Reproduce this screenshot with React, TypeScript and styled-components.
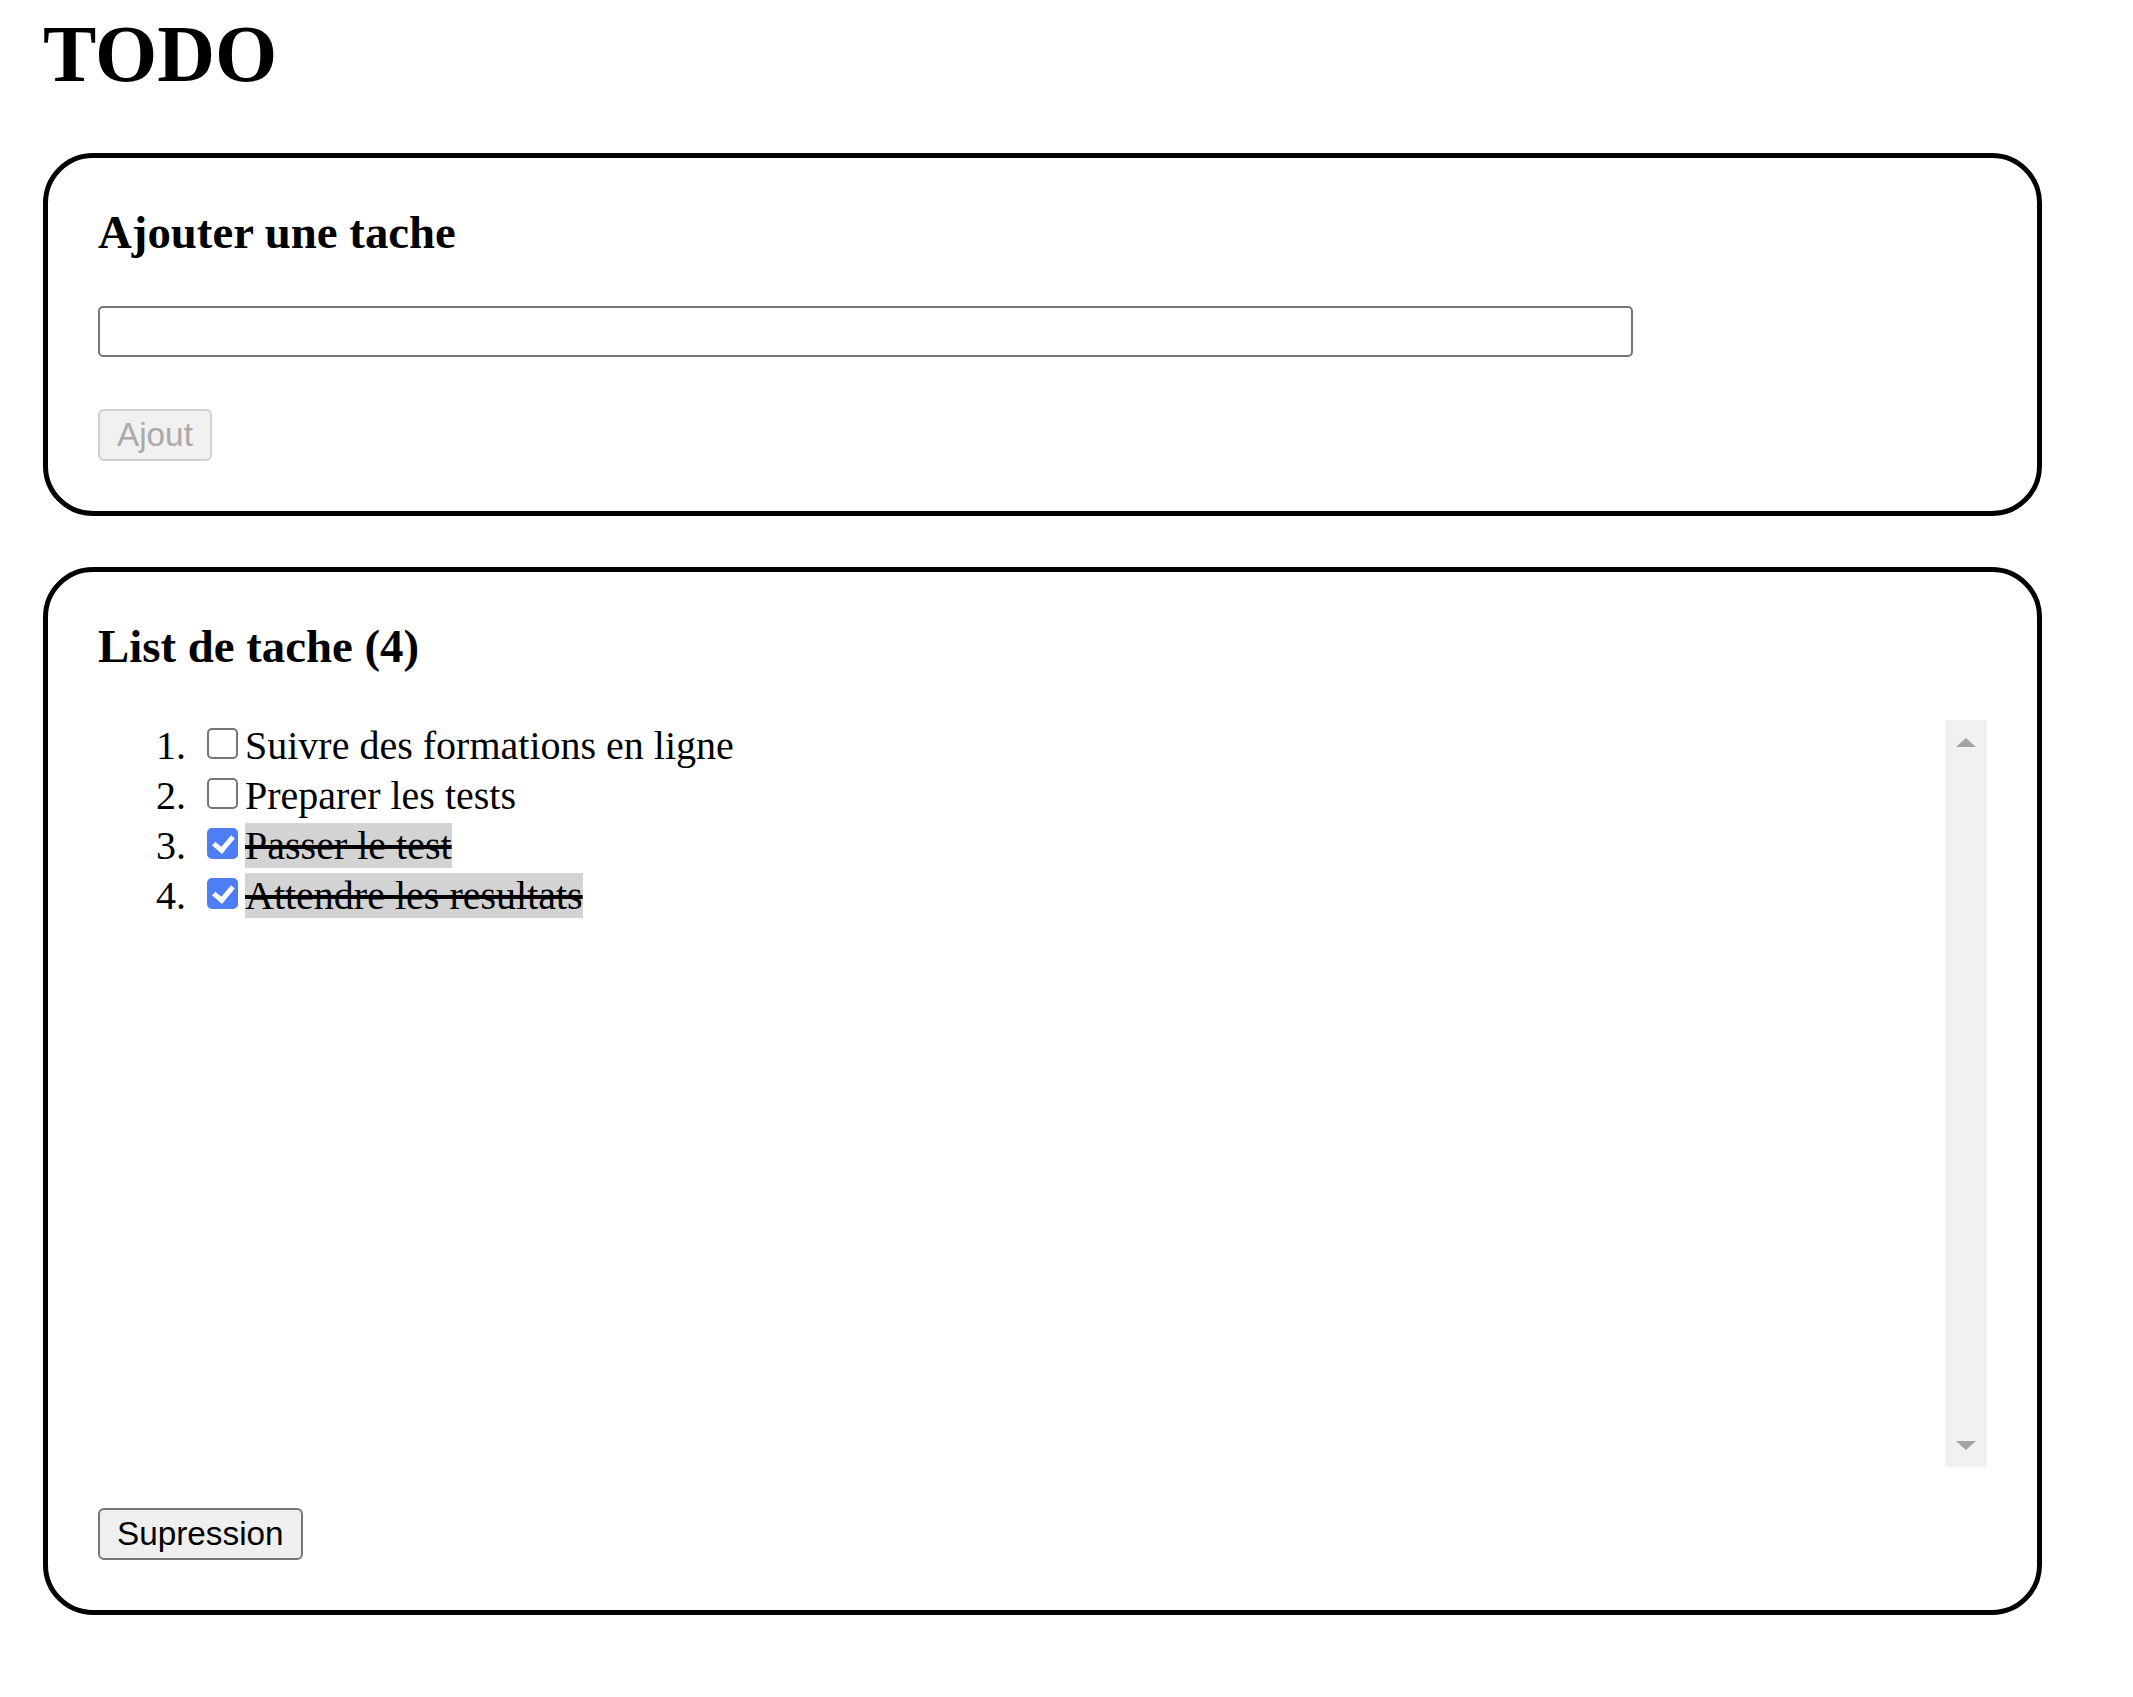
import { useState } from "react";
import styled, { createGlobalStyle } from "styled-components";

const GlobalStyle = createGlobalStyle`
  body {
    margin: 0;
    background: #fff;
    color: #000;
    font-family: "Liberation Serif", "Times New Roman", serif;
  }
`;

const S = {
  Page: styled.div`
    padding: 9px 0 60px 43px;
  `,
  Title: styled.h1`
    margin: 0 0 54px;
    font-size: 80px;
    font-weight: bold;
    line-height: 90px;
  `,
  Card: styled.section`
    box-sizing: border-box;
    width: 1999px;
    border: 5px solid #000;
    border-radius: 50px;
    padding: 48px 50px 50px;
    & + & {
      margin-top: 51px;
    }
  `,
  CardTitle: styled.h3`
    margin: 0 0 47px;
    font-size: 46.8px;
    font-weight: bold;
    line-height: 53px;
  `,
  Form: styled.form`
    display: flex;
    flex-direction: column;
    align-items: flex-start;
    gap: 52px;
  `,
  Input: styled.input`
    box-sizing: border-box;
    width: 1535px;
    height: 51px;
    padding: 2px 6px;
    border: 2px solid #767676;
    border-radius: 5px;
    font-family: "Liberation Sans", Arial, sans-serif;
    font-size: 33.3px;
    outline: none;
  `,
  Button: styled.button<{ $top?: number }>`
    box-sizing: border-box;
    height: 52px;
    margin-top: ${(p) => p.$top ?? 0}px;
    padding: 0 17px;
    border: 2px solid ${(p) => (p.disabled ? "#d0d0d0" : "#767676")};
    border-radius: 6px;
    background: ${(p) => (p.disabled ? "#f1f1f1" : "#efefef")};
    color: ${(p) => (p.disabled ? "#aaaaaa" : "#000")};
    font-family: "Liberation Sans", Arial, sans-serif;
    font-size: 33.3px;
    line-height: 1;
  `,
  ListBox: styled.div`
    display: flex;
    height: 747px;
  `,
  ListScroll: styled.div`
    flex: 1;
    overflow-y: auto;
    scrollbar-width: none;
  `,
  ScrollBar: styled.div`
    display: flex;
    flex-direction: column;
    justify-content: space-between;
    width: 42px;
    background: #f1f1f1;
  `,
  ScrollButton: styled.div<{ $dir: "up" | "down" }>`
    display: flex;
    align-items: center;
    justify-content: center;
    height: 42px;
    padding: ${(p) => (p.$dir == "up" ? "3px 0 0" : "0 0 2px")};
    box-sizing: border-box;

    &::before {
      content: "";
      border-left: 10px solid transparent;
      border-right: 10px solid transparent;
      border-${(p) => (p.$dir == "up" ? "bottom" : "top")}: 9px solid #a3a3a3;
    }
  `,
  List: styled.ol`
    margin: 0;
    padding: 1px 0 0;
    list-style: none;
    counter-reset: task;
  `,
  Item: styled.li`
    counter-increment: task;
    font-size: 40px;
    line-height: 50px;
    white-space: nowrap;

    &::before {
      content: counter(task) ".";
      display: inline-block;
      width: 88px;
      margin-right: 10px;
      text-align: right;
    }
  `,
  Check: styled.input`
    appearance: none;
    position: relative;
    box-sizing: border-box;
    width: 31px;
    height: 31px;
    margin: 0 7px 0 11px;
    border: 2.5px solid #767676;
    border-radius: 5px;
    background: #fff;
    vertical-align: baseline;

    &:checked {
      border-color: #4d7ef5;
      background: #4d7ef5;
    }
    &:checked::after {
      content: "";
      position: absolute;
      left: 8px;
      top: 2px;
      width: 8px;
      height: 15px;
      border: solid #fff;
      border-width: 0 5px 5px 0;
      transform: rotate(40deg);
    }
  `,
  Label: styled.span<{ $done: boolean }>`
    background: ${(p) => (p.$done ? "#d3d3d3" : "transparent")};
    text-decoration: ${(p) => (p.$done ? "line-through" : "none")};
    text-decoration-thickness: 4px;
  `,
};

type Task = { id: number; label: string; done: boolean };

const initialTasks: Task[] = [
  { id: 1, label: "Suivre des formations en ligne", done: false },
  { id: 2, label: "Preparer les tests", done: false },
  { id: 3, label: "Passer le test", done: true },
  { id: 4, label: "Attendre les resultats", done: true },
];

const App = () => {
  const [tasks, setTasks] = useState<Task[]>(initialTasks);
  const [text, setText] = useState("");

  const addTask = (e: React.FormEvent) => {
    e.preventDefault();
    if (!text.trim()) return;
    setTasks([...tasks, { id: Date.now(), label: text.trim(), done: false }]);
    setText("");
  };

  const toggle = (id: number) => {
    setTasks(tasks.map((t) => (t.id == id ? { ...t, done: !t.done } : t)));
  };

  const removeDone = () => {
    setTasks(tasks.filter((t) => !t.done));
  };

  return (
    <>
      <GlobalStyle />
      <S.Page>
        <S.Title>TODO</S.Title>
        <S.Card>
          <S.CardTitle>Ajouter une tache</S.CardTitle>
          <S.Form onSubmit={addTask}>
            <S.Input
              type="text"
              value={text}
              onChange={(e) => setText(e.target.value)}
            />
            <S.Button type="submit" disabled={text.trim() == ""}>
              Ajout
            </S.Button>
          </S.Form>
        </S.Card>
        <S.Card>
          <S.CardTitle>List de tache ({tasks.length})</S.CardTitle>
          <S.ListBox>
            <S.ListScroll>
              <S.List>
                {tasks.map((t) => (
                  <S.Item key={t.id}>
                    <S.Check
                      type="checkbox"
                      checked={t.done}
                      onChange={() => toggle(t.id)}
                    />
                    <S.Label $done={t.done}>{t.label}</S.Label>
                  </S.Item>
                ))}
              </S.List>
            </S.ListScroll>
            <S.ScrollBar>
              <S.ScrollButton $dir="up" />
              <S.ScrollButton $dir="down" />
            </S.ScrollBar>
          </S.ListBox>
          <S.Button type="button" $top={41} onClick={removeDone}>
            Supression
          </S.Button>
        </S.Card>
      </S.Page>
    </>
  );
};

export default App;
